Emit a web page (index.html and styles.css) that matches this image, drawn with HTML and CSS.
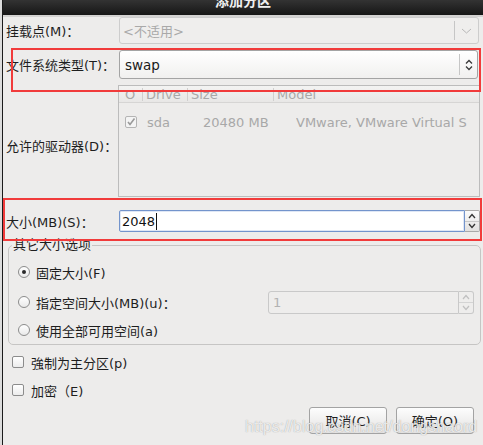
FILE: index.html
```html
<!DOCTYPE html>
<html lang="zh-CN">
<head>
<meta charset="utf-8">
<title>添加分区</title>
<link rel="stylesheet" href="styles.css">
</head>
<body>
<div class="screen">
  <div class="dialog">
    <div class="titlebar"><span class="title">添加分区</span></div>
    <div class="content">
      <div class="row r-mount">
        <span class="lbl">挂载点(M)：</span>
        <div class="combo combo-disabled">
          <span class="combo-text">&lt;不适用&gt;</span>
          <span class="combo-sep"></span>
          <span class="combo-btn btn-wide">
            <svg width="11" height="6" viewBox="0 0 11 6"><polyline points="1,1 5.5,5 10,1" fill="none" stroke="#b8b8b8" stroke-width="1"/></svg>
          </span>
        </div>
      </div>

      <div class="row r-fs">
        <span class="lbl">文件系统类型(T)：</span>
        <div class="combo">
          <span class="combo-text text-dark">swap</span>
          <span class="combo-sep"></span>
          <span class="combo-btn">
            <svg width="8" height="12" viewBox="0 0 8 12"><polyline points="1,4.5 4,1.5 7,4.5" fill="none" stroke="#3a3a3a" stroke-width="1.3"/><polyline points="1,7.5 4,10.5 7,7.5" fill="none" stroke="#3a3a3a" stroke-width="1.3"/></svg>
          </span>
        </div>
      </div>

      <div class="row r-drive">
        <span class="lbl lbl-drive">允许的驱动器(D)：</span>
        <div class="drives">
          <div class="drives-head">
            <span class="hc hc1">O</span>
            <span class="hc hc2">Drive</span>
            <span class="hc hc3">Size</span>
            <span class="hc hc4">Model</span>
          </div>
          <div class="drive-row">
            <span class="dc dc1"><span class="tick">
              <svg width="10" height="10" viewBox="0 0 10 10"><polyline points="2,5 4,7.5 8.5,1.5" fill="none" stroke="#9a9a9a" stroke-width="1.6"/></svg>
            </span></span>
            <span class="dc dc2">sda</span>
            <span class="dc dc3">20480 MB</span>
            <span class="dc dc4">VMware, VMware Virtual S</span>
          </div>
        </div>
      </div>

      <div class="row r-size">
        <span class="lbl">大小(MB)(S)：</span>
        <div class="spin">
          <div class="spin-entry spin-focus"><span class="caret">2048</span></div>
          <div class="spin-btns">
            <span class="spin-b"><svg width="8" height="6" viewBox="0 0 8 6"><polyline points="1,5 4,1.5 7,5" fill="none" stroke="#333" stroke-width="1.3"/></svg></span>
            <span class="spin-b"><svg width="8" height="6" viewBox="0 0 8 6"><polyline points="1,1 4,4.5 7,1" fill="none" stroke="#333" stroke-width="1.3"/></svg></span>
          </div>
        </div>
      </div>

      <fieldset class="group">
        <legend class="legend">其它大小选项</legend>
        <div class="opt opt1">
          <span class="radio radio-on"></span>
          <span class="opt-text">固定大小(F)</span>
        </div>
        <div class="opt opt2">
          <span class="radio"></span>
          <span class="opt-text">指定空间大小(MB)(u)：</span>
          <div class="spin spin-off">
            <div class="spin-entry"><span class="off-text">1</span></div>
            <div class="spin-btns spin-btns-off">
              <span class="spin-b"><svg width="8" height="6" viewBox="0 0 8 6"><polyline points="1,5 4,1.5 7,5" fill="none" stroke="#c0c0c0" stroke-width="1.2"/></svg></span>
              <span class="spin-b"><svg width="8" height="6" viewBox="0 0 8 6"><polyline points="1,1 4,4.5 7,1" fill="none" stroke="#c0c0c0" stroke-width="1.2"/></svg></span>
            </div>
          </div>
        </div>
        <div class="opt opt3">
          <span class="radio"></span>
          <span class="opt-text">使用全部可用空间(a)</span>
        </div>
      </fieldset>

      <div class="chk chk1">
        <span class="box"></span>
        <span class="chk-text">強制为主分区(p)</span>
      </div>
      <div class="chk">
        <span class="box"></span>
        <span class="chk-text">加密（E)</span>
      </div>

      <div class="buttons">
        <button class="btn" type="button">取消(C)</button>
        <button class="btn" type="button">确定(O)</button>
      </div>
    </div>

    <div class="redbox redbox1"></div>
    <div class="redbox redbox2"></div>
    <div class="watermark">https://blog.csdn.net/dongshaord</div>
  </div>
</div>
</body>
</html>
```

FILE: styles.css
```css
* { box-sizing: border-box; }
html, body { margin: 0; padding: 0; }
body {
  width: 483px;
  height: 445px;
  overflow: hidden;
  background: #dcdcdc;
  font-family: "DejaVu Sans", "Noto Sans CJK SC", sans-serif;
  font-size: 13px;
  color: #1e1e1e;
}
.screen { padding-left: 2px; height: 445px; }
.dialog {
  position: relative;
  height: 445px;
  border-left: 1px solid #1b1b1b;
  background: #edeceb;
}
.titlebar {
  height: 17px;
  background: linear-gradient(#333333, #161616);
  border-bottom: 2px solid #d3d2d1;
  overflow: hidden;
  text-align: center;
}
.title {
  display: block;
  margin-top: -6px;
  line-height: 14px;
  font-size: 14px;
  font-weight: bold;
  color: #f0f0f0;
}
.content { padding-left: 3px; }

.row { display: flex; align-items: center; }
.lbl { width: 113px; flex: none; white-space: nowrap; }
.r-mount { height: 27px; margin-right: 4px; }
.r-fs { height: 29px; margin-top: 6px; margin-right: 5px; }
.r-drive { height: 112px; margin-top: 6px; margin-right: 3px; }
.r-size { height: 22px; margin-top: 13px; margin-right: 3px; }
.lbl-drive { width: 112px; padding-top: 8px; }

.combo {
  flex: 1;
  height: 100%;
  display: flex;
  align-items: center;
  border: 1px solid #a4a4a4;
  border-radius: 3px;
  background: linear-gradient(#ffffff, #f1f0ef);
}
.combo-disabled { border-color: #cdcdcd; background: #efeeed; }
.combo-text { flex: 1; padding-left: 5px; color: #a9a9a9; white-space: nowrap; }
.combo-disabled .combo-text { padding-left: 3px; }
.text-dark { color: #1a1a1a; font-size: 13.5px; }
.combo-sep { width: 1px; align-self: stretch; margin: 3px 0; background: #c6c6c6; }
.combo-btn { width: 17px; display: flex; justify-content: center; align-items: center; }
.btn-wide { width: 23px; }
.combo-btn svg { display: block; }

.drives {
  flex: 1;
  height: 100%;
  border: 1px solid #bcbcbc;
  background: #edeceb;
  color: #a8a8a8;
}
.drives-head {
  height: 17px;
  display: flex;
  align-items: center;
  background: linear-gradient(#f3f3f2, #e8e7e6);
  border-bottom: 1px solid #d6d5d4;
}
.hc { height: 13px; line-height: 13px; border-right: 1px solid #d0cfce; padding-left: 3px; white-space: nowrap; }
.hc1 { width: 24px; padding-left: 6px; }
.hc2 { width: 45px; }
.hc3 { width: 86px; }
.hc4 { flex: 1; border-right: none; }
.drive-row { display: flex; align-items: center; height: 20px; margin-top: 9px; white-space: nowrap; }
.dc { flex: none; }
.dc1 { width: 28px; padding-left: 6px; display: flex; }
.dc2 { width: 56px; }
.dc3 { width: 93px; }
.dc4 { flex: 1; overflow: hidden; }
.tick {
  width: 12px; height: 12px;
  border: 1px solid #b4b4b4;
  border-radius: 2px;
  background: #f4f4f4;
  display: flex; align-items: center; justify-content: center;
}
.tick svg { display: block; }

.spin { flex: 1; height: 100%; display: flex; }
.spin-entry {
  flex: 1;
  display: flex;
  align-items: center;
  padding-left: 2px;
  background: #ffffff;
  border: 1px solid #c4c4c4;
  border-radius: 2px 0 0 2px;
}
.spin-focus { border-color: #7394cc; box-shadow: inset 0 0 0 1px #dfe7f5; }
.caret { border-right: 1px solid #111; padding-right: 1px; line-height: 17px; color: #111; }
.spin-btns {
  width: 15px;
  display: flex;
  flex-direction: column;
  border: 1px solid #a9a9a9;
  border-left: none;
  border-radius: 0 2px 2px 0;
  background: linear-gradient(#fafafa, #e2e1e0);
}
.spin-b { flex: 1; display: flex; align-items: center; justify-content: center; }
.spin-b + .spin-b { border-top: 1px solid #c8c8c8; }
.spin-b svg { display: block; }

.group {
  margin: 6px 2px 0 2px;
  padding: 5px 0 1px 0;
  border: 1px solid #c6c5c4;
  border-radius: 5px;
  min-width: 0;
}
.legend {
  margin-left: 3px;
  padding: 0 1px;
  line-height: 14px;
  font-size: 13px;
}
.opt { display: flex; align-items: center; padding-left: 9px; }
.opt1, .opt2 { height: 30px; }
.opt3 { height: 26px; }
.radio {
  width: 12px; height: 12px;
  border: 1px solid #8c8c8c;
  border-radius: 50%;
  background: linear-gradient(#ffffff, #e9e9e9);
  display: flex; align-items: center; justify-content: center;
  flex: none;
}
.radio-on::after {
  content: "";
  width: 4px; height: 4px;
  border-radius: 50%;
  background: #2a2a2a;
}
.opt-text { margin-left: 6px; white-space: nowrap; }
.spin-off {
  flex: none;
  width: 206px;
  height: 23px;
  margin-left: auto;
  margin-right: 6px;
}
.spin-off .spin-entry { background: #eeedec; border-color: #c9c9c9; padding-left: 4px; border-radius: 3px 0 0 3px; }
.off-text { color: #b2b2b2; }
.spin-btns-off { border-color: #c9c9c9; background: #eeedec; border-radius: 0 3px 3px 0; }
.spin-btns-off .spin-b + .spin-b { border-top-color: #d4d4d4; }

.chk { display: flex; align-items: center; height: 28px; padding-left: 6px; }
.chk1 { margin-top: 3px; }
.box {
  width: 12px; height: 12px;
  border: 1px solid #8c8c8c;
  border-radius: 2px;
  background: linear-gradient(#ffffff, #ececec);
  flex: none;
}
.chk-text { margin-left: 7px; white-space: nowrap; }

.buttons {
  display: flex;
  justify-content: flex-end;
  gap: 9px;
  margin-top: 3px;
  padding-right: 9px;
}
.btn {
  width: 78px;
  height: 27px;
  padding: 0;
  font-family: "DejaVu Sans", "Noto Sans CJK SC", sans-serif;
  font-size: 13px;
  color: #1e1e1e;
  border: 1px solid #a3a3a3;
  border-radius: 3px;
  background: linear-gradient(#fdfdfd, #e3e2e1);
}

.redbox { position: absolute; border: 2px solid #f13b3b; }
.redbox1 { left: 8px; top: 48px; width: 470px; height: 44px; }
.redbox2 { left: 0; top: 198px; width: 479px; height: 43px; }
.watermark {
  position: absolute;
  left: 242px;
  top: 417px;
  font-family: "Liberation Sans", Arial, sans-serif;
  font-size: 16px;
  line-height: 20px;
  color: rgba(255, 255, 255, 0.8);
  text-shadow: 0 0 1px rgba(110, 110, 110, 0.7);
  white-space: nowrap;
}
```
